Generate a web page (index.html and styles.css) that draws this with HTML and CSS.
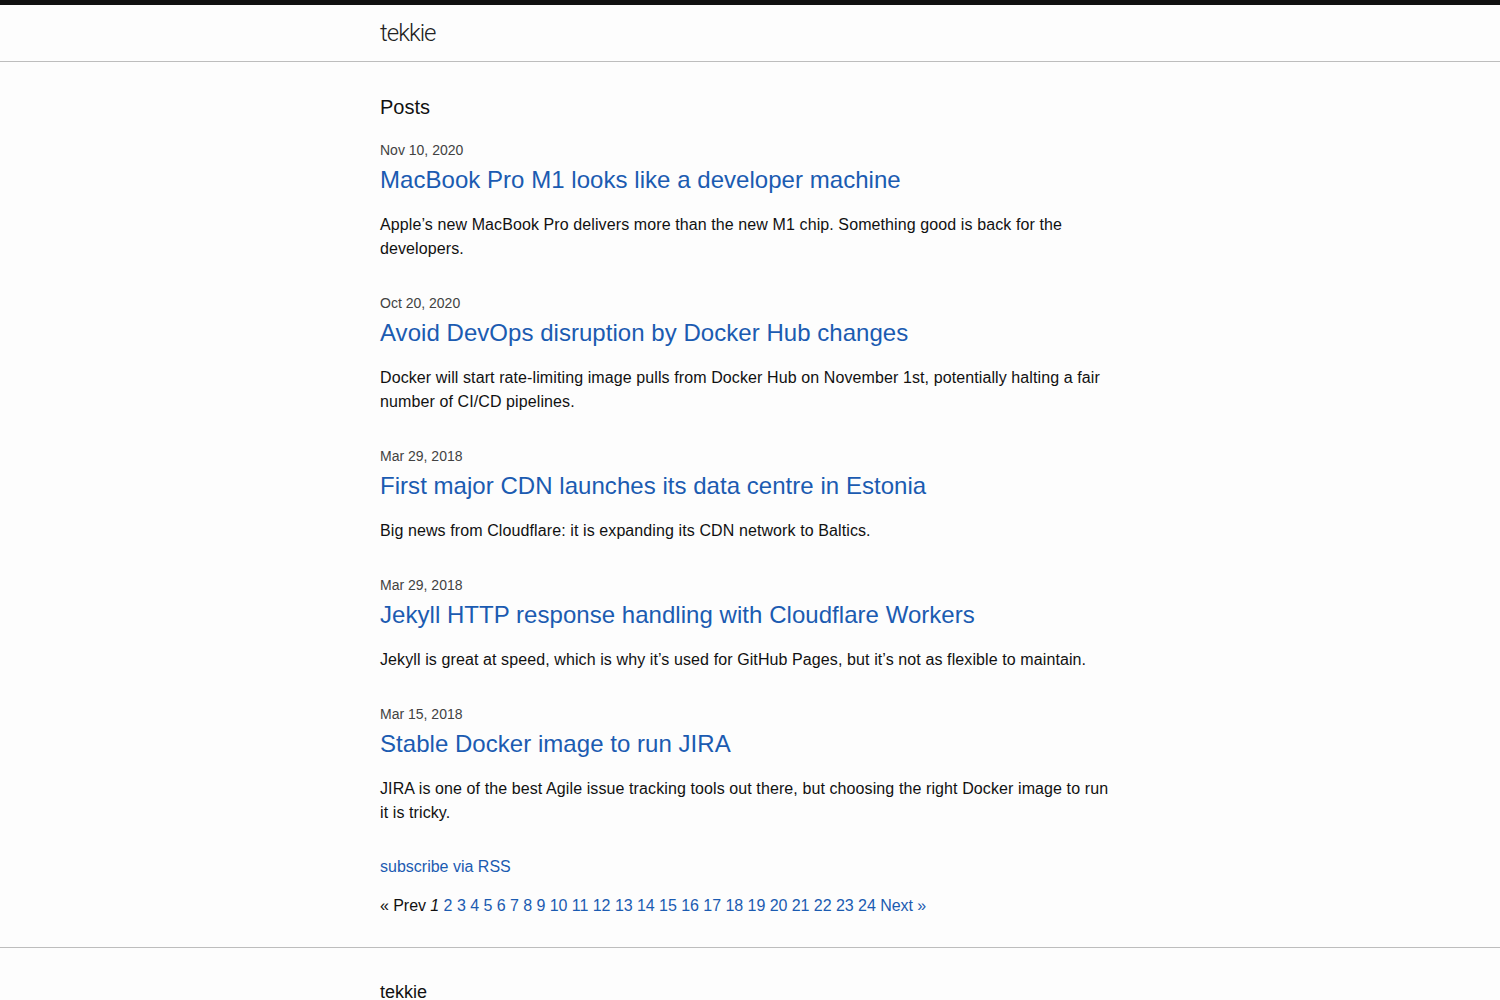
FILE: index.html
```html
<!DOCTYPE html>
<html lang="en">
<head>
<meta charset="utf-8">
<title>tekkie</title>
<link rel="stylesheet" href="styles.css">
</head>
<body>
<header class="site-header">
  <div class="wrapper">
    <a class="site-title" href="#">tekkie</a>
  </div>
</header>
<main class="page-content">
  <div class="wrapper">
    <h2 class="post-list-heading">Posts</h2>
    <ul class="post-list">
      <li class="post-item">
        <span class="post-meta">Nov 10, 2020</span>
        <h3 class="post-title"><a class="post-link" href="#">MacBook Pro M1 looks like a developer machine</a></h3>
        <p class="post-excerpt">Apple’s new MacBook Pro delivers more than the new M1 chip. Something good is back for the developers.</p>
      </li>
      <li class="post-item">
        <span class="post-meta">Oct 20, 2020</span>
        <h3 class="post-title"><a class="post-link" href="#">Avoid DevOps disruption by Docker Hub changes</a></h3>
        <p class="post-excerpt">Docker will start rate-limiting image pulls from Docker Hub on November 1st, potentially halting a fair number of CI/CD pipelines.</p>
      </li>
      <li class="post-item">
        <span class="post-meta">Mar 29, 2018</span>
        <h3 class="post-title"><a class="post-link" href="#">First major CDN launches its data centre in Estonia</a></h3>
        <p class="post-excerpt">Big news from Cloudflare: it is expanding its CDN network to Baltics.</p>
      </li>
      <li class="post-item">
        <span class="post-meta">Mar 29, 2018</span>
        <h3 class="post-title"><a class="post-link" href="#">Jekyll HTTP response handling with Cloudflare Workers</a></h3>
        <p class="post-excerpt">Jekyll is great at speed, which is why it’s used for GitHub Pages, but it’s not as flexible to maintain.</p>
      </li>
      <li class="post-item">
        <span class="post-meta">Mar 15, 2018</span>
        <h3 class="post-title"><a class="post-link" href="#">Stable Docker image to run JIRA</a></h3>
        <p class="post-excerpt">JIRA is one of the best Agile issue tracking tools out there, but choosing the right Docker image to run it is tricky.</p>
      </li>
    </ul>
    <p class="rss-subscribe"><a href="#">subscribe via RSS</a></p>
    <div class="pagination">« Prev <em>1</em> <a href="#">2</a> <a href="#">3</a> <a href="#">4</a> <a href="#">5</a> <a href="#">6</a> <a href="#">7</a> <a href="#">8</a> <a href="#">9</a> <a href="#">10</a> <a href="#">11</a> <a href="#">12</a> <a href="#">13</a> <a href="#">14</a> <a href="#">15</a> <a href="#">16</a> <a href="#">17</a> <a href="#">18</a> <a href="#">19</a> <a href="#">20</a> <a href="#">21</a> <a href="#">22</a> <a href="#">23</a> <a href="#">24</a> <a href="#">Next »</a></div>
  </div>
</main>
<footer class="site-footer">
  <div class="wrapper">
    <h2 class="footer-heading">tekkie</h2>
  </div>
</footer>
</body>
</html>
```

FILE: styles.css
```css
* { box-sizing: border-box; }
html, body { margin: 0; padding: 0; }
body {
  font-family: "Liberation Sans", Arial, Helvetica, sans-serif;
  font-size: 16px;
  line-height: 24px;
  color: #111;
  background: #fdfdfd;
}
a { color: #1b5bb1; text-decoration: none; }
.wrapper {
  max-width: 800px;
  margin: 0 auto;
  padding: 0 30px;
}
.site-header {
  border-top: 5px solid #111;
  border-bottom: 1px solid #bdbdbd;
  height: 62px;
}
.site-title {
  display: block;
  font-family: "Roboto", "Liberation Sans", sans-serif;
  font-weight: 300;
  font-size: 24px;
  line-height: 56px;
  letter-spacing: -1px;
  color: #222;
}
.page-content { padding: 30px 0 29px; }
.post-list-heading {
  margin: 0 0 18px;
  font-size: 20px;
  font-weight: 400;
  line-height: 30px;
}
.post-list { list-style: none; margin: 0; padding: 0; }
.post-item { margin-bottom: 32px; }
.post-item:last-child { margin-bottom: 0; }
.post-meta {
  display: block;
  font-size: 14px;
  line-height: 20px;
  color: #424242;
}
.post-title {
  margin: 5px 0 18px;
  font-size: 24px;
  font-weight: 400;
  line-height: 30px;
  letter-spacing: 0.04px;
}
.post-excerpt { margin: 0; letter-spacing: 0.1px; }
.rss-subscribe { margin: 30px 0 15px; }
.pagination { line-height: 24px; letter-spacing: -0.05px; }
.pagination em { font-style: italic; }
.site-footer {
  border-top: 1px solid #bdbdbd;
  padding: 31px 0 30px;
}
.footer-heading {
  margin: 0;
  font-size: 18px;
  font-weight: 400;
  line-height: 27px;
}
```
